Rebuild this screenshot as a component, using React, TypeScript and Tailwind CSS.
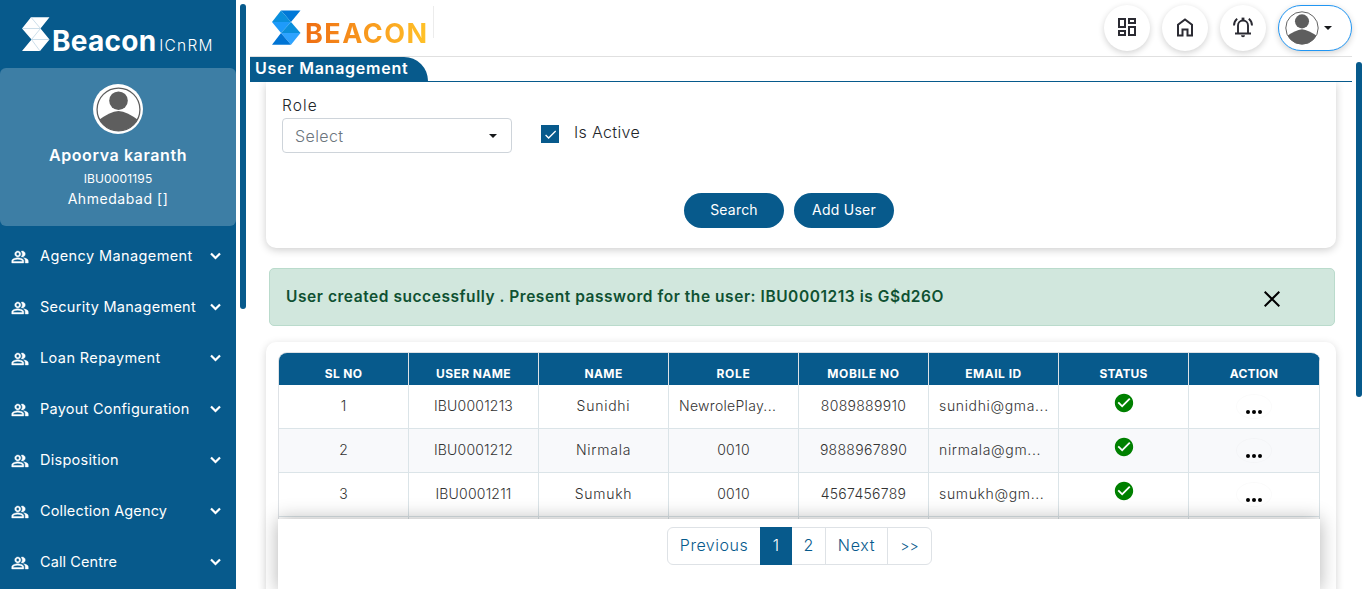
import React from "react";
import { MdOutlineDashboard, MdOutlinePeopleAlt, MdCheckCircle, MdCheck } from "react-icons/md";

const menu = [
  { label: "Agency Management", cls: "tracking-[0.4px]" },
  { label: "Security Management", cls: "tracking-[0.27px]" },
  { label: "Loan Repayment", cls: "tracking-[0.4px]" },
  { label: "Payout Configuration", cls: "tracking-[0.25px]" },
  { label: "Disposition", cls: "tracking-[0.27px]" },
  { label: "Collection Agency", cls: "tracking-[0.14px]" },
  { label: "Call Centre", cls: "tracking-[0.1px]" },
];

const columns = [
  { label: "SL NO", cls: "tracking-[0.3px]" },
  { label: "USER NAME", cls: "tracking-[0.4px]" },
  { label: "NAME", cls: "tracking-[0.4px]" },
  { label: "ROLE", cls: "tracking-[0.7px]" },
  { label: "MOBILE NO", cls: "tracking-[0.6px]" },
  { label: "EMAIL ID", cls: "tracking-[0.5px]" },
  { label: "STATUS", cls: "tracking-[0.1px]" },
  { label: "ACTION", cls: "tracking-[0.2px]" },
];

const cellClasses = [
  "text-center",
  "text-center tracking-[0.2px]",
  "text-center tracking-[0.75px]",
  "text-center tracking-[0.3px]",
  "text-center tracking-[0.3px]",
  "pl-[10px] text-left tracking-[0.65px]",
];

const rows = [
  ["1", "IBU0001213", "Sunidhi", "NewrolePlay...", "8089889910", "sunidhi@gma..."],
  ["2", "IBU0001212", "Nirmala", "0010", "9888967890", "nirmala@gm..."],
  ["3", "IBU0001211", "Sumukh", "0010", "4567456789", "sumukh@gm..."],
];

function Avatar({ size }: { size: number }) {
  return (
    <svg width={size} height={size} viewBox="0 0 42 42">
      <clipPath id={`disc-${size}`}>
        <circle cx="21" cy="21" r="20" />
      </clipPath>
      <circle cx="21" cy="21" r="20" fill="#fff" stroke="#5e5e5e" strokeWidth="1.2" />
      <g clipPath={`url(#disc-${size})`} fill="#5e5e5e">
        <circle cx="21" cy="12.800" r="8.700" />
        <path d="M1 32Q13 23 21 22.500Q29 23 41 32V44H1Z" />
      </g>
    </svg>
  );
}

function WhiteMark() {
  return (
    <svg width="28" height="35" viewBox="0 0 28 35" className="shrink-0">
      <path d="M9 0.300H27.500L18.500 11.500L27.500 22.500L18 34H0L9.500 22.500L0 11.500Z" fill="#fff" />
      <path d="M0 11.500H18.500M9.500 22.500H27M9 0.300L18.500 11.500L9.500 22.500L18 34" stroke="#a9c8dc" strokeWidth=".6" fill="none" />
    </svg>
  );
}

function BlueMark() {
  return (
    <svg width="29" height="36" viewBox="0 0 29 36" className="shrink-0">
      <path d="M9 0.500H28.500L19 12Z" fill="#0078d7" />
      <path d="M9 0.500L19 12H0Z" fill="#0a8fdc" />
      <path d="M0 12H19L9 23Z" fill="#1e9bfa" />
      <path d="M19 12L28.500 23H9Z" fill="#0a8fdc" />
      <path d="M9 23H28.500L19 34.800Z" fill="#2ea3ff" />
      <path d="M9 23L19 34.800H0Z" fill="#0074d4" />
    </svg>
  );
}

function HomeIcon() {
  return (
    <svg width="24" height="24" viewBox="0 0 24 24" fill="none" stroke="#2b2b33" strokeWidth="2">
      <path d="M5 19.500V8.800L12 3.500L19 8.800V19.500H14.500V13.500H9.500V19.500Z" />
    </svg>
  );
}

function BellIcon() {
  return (
    <svg width="24" height="24" viewBox="0 0 24 24" fill="none" stroke="#2b2b33" strokeWidth="1.9">
      <path d="M4 17.500H20M7 17.500V9.500A5 5 0 0 1 17 9.500V17.500" />
      <path d="M12 4.500V1.600" strokeWidth="2.800" />
      <path d="M6.200 2.800Q3 5.300 3 9.500M17.800 2.800Q21 5.300 21 9.500" />
      <path d="M10 19.300H14A2 2 0 0 1 10 19.300Z" fill="#2b2b33" stroke="none" />
    </svg>
  );
}

function Caret() {
  return <span className="h-0 w-0 border-x-4 border-t-4 border-x-transparent border-t-[#16181b]" />;
}

const roundButton =
  "flex h-[46px] w-[46px] items-center justify-center rounded-full bg-white text-[#2b2b33] shadow-[0_2px_6px_rgba(0,0,0,0.18)]";

export default function App() {
  return (
    <div className="flex h-[589px] w-[1366px] overflow-hidden bg-white font-[Inter,sans-serif] text-[#212529]">
      <aside className="flex w-[236px] shrink-0 flex-col bg-[#075a8c] text-white">
        <div className="flex h-[68px] shrink-0 pl-[22px] pt-[17px]">
          <WhiteMark />
          <span className="ml-[2px] mt-[8px] text-[28px] font-bold leading-[32px] tracking-[0.25px]">Beacon</span>
          <span className="ml-[3px] mt-[19px] text-[15.5px] font-light leading-[20px] tracking-[1.2px]">ICnRM</span>
        </div>
        <div className="flex h-[158px] shrink-0 flex-col items-center rounded-[6px] bg-[#3d7ea5] pt-[16px]">
          <div className="flex h-[50px] w-[50px] items-center justify-center rounded-full bg-white">
            <Avatar size={45} />
          </div>
          <div className="mt-[9px] text-[16px] font-semibold leading-[24px] tracking-[0.6px]">Apoorva karanth</div>
          <div className="mt-[2px] text-[12px] leading-[20px] tracking-[0.15px]">IBU0001195</div>
          <div className="-mt-px text-[14px] leading-[21px] tracking-[0.55px]">Ahmedabad []</div>
        </div>
        <nav className="flex flex-col pt-[4px]">
          {menu.map((item) => (
            <div key={item.label} className="flex h-[51px] shrink-0 items-center pl-[11px] pr-[15px]">
              <MdOutlinePeopleAlt size={18} className="mt-[2px] shrink-0 stroke-white stroke-[0.5] [&_path[fill=none]]:stroke-none" />
              <span className={`ml-[11px] flex-1 whitespace-nowrap text-[14.5px] leading-[22px] ${item.cls}`}>{item.label}</span>
              <svg width="11" height="8" viewBox="0 0 11 8" fill="none" stroke="#fff" strokeWidth="2.2" className="mt-px">
                <path d="M1 1.500L5.500 6L10 1.500" />
              </svg>
            </div>
          ))}
        </nav>
      </aside>

      <div className="w-[14px] shrink-0 pl-[4px] pt-[4px]">
        <div className="h-[305px] w-[6px] rounded-[3px] bg-[#075a8c]" />
      </div>

      <main className="flex w-[1102px] shrink-0 flex-col">
        <header className="flex h-[57px] shrink-0 justify-between border-b border-[#e0e0e0]">
          <div className="flex pl-[22px] pt-[10px]">
            <BlueMark />
            <span className="ml-[4px] mt-[8px] bg-linear-to-r from-[#ee6c13] to-[#ffc328] bg-clip-text text-[27px] font-bold leading-[32px] tracking-[1.5px] text-transparent">
              BEACON
            </span>
            <span className="-mt-[4px] ml-[4px] h-[32px] w-px bg-[#ececec]" />
          </div>
          <div className="flex gap-[12px] pt-[5px]">
            <div className={roundButton}><MdOutlineDashboard size={24} className="-mt-[2px]" /></div>
            <div className={roundButton}><HomeIcon /></div>
            <div className={roundButton}><BellIcon /></div>
            <div className="flex h-[46px] w-[74px] items-center gap-[5px] rounded-full border border-[#2196f3] bg-white pl-[6px] shadow-[0_2px_6px_rgba(0,0,0,0.18)]">
              <Avatar size={34} />
              <Caret />
            </div>
          </div>
        </header>
        <div className="flex h-[25px] shrink-0 border-b border-[#075a8c]">
          <h1 className="h-[25px] w-[178px] rounded-tr-[24px] bg-[#075a8c] pl-[5px] text-[16px] font-semibold leading-[23px] tracking-[0.75px] text-white">
            User Management
          </h1>
        </div>

        <div className="flex h-[507px] shrink-0 flex-col overflow-hidden">
          <section className="mx-[16px] h-[166px] shrink-0 rounded-b-[10px] bg-white px-[16px] pt-[13px] shadow-[0_2px_8px_rgba(0,0,0,0.2)]">
            <div className="flex">
              <div className="w-[230px]">
                <div className="text-[15.5px] font-light leading-[22px] tracking-[1.1px]">Role</div>
                <div className="mt-px flex h-[35px] items-center justify-between rounded-[4px] border border-[#ced4da] px-[12px] pr-[14px] text-[16px] font-light tracking-[0.4px] text-[#6c757d]">
                  Select
                  <Caret />
                </div>
              </div>
              <div className="ml-[29px] mt-[30px] flex h-[18px] w-[18px] items-center justify-center bg-[#075a8c] text-white">
                <MdCheck size={15} />
              </div>
              <span className="ml-[15px] mt-[25px] text-[16px] font-light leading-[24px] tracking-[0.35px]">Is Active</span>
            </div>
            <div className="mt-[40px] flex justify-center gap-[10px] pr-[24px] text-[14px] text-white">
              <button className="h-[35px] w-[100px] rounded-full bg-[#075a8c] pb-[2px] tracking-[0.2px]">Search</button>
              <button className="h-[35px] w-[100px] rounded-full bg-[#075a8c] pb-[2px] tracking-[0.25px]">Add User</button>
            </div>
          </section>

          <div className="ml-[19px] mt-[20px] flex h-[58px] w-[1066px] shrink-0 items-start justify-between rounded-[5px] border border-[#badbcc] bg-[#d1e7dd] pl-[16px] pr-[54px] text-[#0f5132]">
            <span className="mt-[16px] whitespace-nowrap text-[15.5px] font-semibold leading-[24px] tracking-[0.55px]">
              User created successfully . Present password for the user: IBU0001213 is G$d26O
            </span>
            <svg className="mt-[22px]" width="16" height="16" viewBox="0 0 16 16" stroke="#000" strokeWidth="2">
              <path d="M.7 .7L15.300 15.300M15.300 .7L.7 15.300" />
            </svg>
          </div>

          <section className="relative mx-[16px] mt-[16px] h-[300px] shrink-0 rounded-t-[10px] bg-white px-[12px] pt-[10px] shadow-[0_2px_8px_rgba(0,0,0,0.16)]">
            <table className="w-[1042px] table-fixed border-separate border-spacing-0 overflow-hidden rounded-t-[9px] border-l border-t border-[#dee2e6]">
              <thead>
                <tr>
                  {columns.map((column) => (
                    <th key={column.label} className={`h-[32px] w-[130px] border-r border-[#dee2e6] bg-[#075a8c] p-0 pt-[10px] text-[12px] font-bold leading-[22px] text-white last:w-[131px] ${column.cls}`}>
                      {column.label}
                    </th>
                  ))}
                </tr>
              </thead>
              <tbody>
                {rows.map((row) => (
                  <tr key={row[0]} className="even:bg-[#f8f9fb]">
                    {row.map((value, index) => (
                      <td key={index} className={`h-[44px] border-b border-r border-[#dbe4e8] p-0 pb-[2px] align-middle text-[14px] font-light text-[#333] ${value.endsWith("...") && index === 3 ? "pl-[10px] text-left tracking-[0.3px]" : cellClasses[index]}`}>
                        {value}
                      </td>
                    ))}
                    <td className="border-b border-r border-[#dbe4e8] p-0 align-top">
                      <MdCheckCircle size={22} color="#008000" className="mx-auto mt-[7px]" />
                    </td>
                    <td className="border-b border-r border-[#dbe4e8] p-0 align-top">
                      <div className="mx-auto mt-[9px] flex h-[25px] w-[36px] items-end justify-center gap-[2px] rounded-[50%] border border-black/2 pb-[4px]">
                        <i className="h-[4px] w-[4px] rounded-full bg-black" />
                        <i className="h-[4px] w-[4px] rounded-full bg-black" />
                        <i className="h-[4px] w-[4px] rounded-full bg-black" />
                      </div>
                    </td>
                  </tr>
                ))}
                <tr>
                  {columns.map((column) => (
                    <td key={column.label} className="h-[20px] border-r border-[#dbe4e8]" />
                  ))}
                </tr>
              </tbody>
            </table>
            <div className="absolute left-[12px] top-[177px] flex h-[72px] w-[1042px] items-start justify-center bg-white pl-px pt-[8px] shadow-[0_0_18px_rgba(0,0,0,0.3)]">
              <div className="flex h-[38px] w-[265px] rounded-[6px] border border-[#dee2e6] text-center text-[16px] font-light leading-[35px] text-[#075a8c]">
                <span className="w-[92px] tracking-[0.5px]">Previous</span>
                <span className="-my-px w-[32px] bg-[#075a8c] leading-[37px] text-white">1</span>
                <span className="w-[34px] border-r border-[#dee2e6]">2</span>
                <span className="w-[62px] border-r border-[#dee2e6] tracking-[0.7px]">Next</span>
                <span className="w-[43px] text-[14px]">&gt;&gt;</span>
              </div>
            </div>
          </section>
        </div>
      </main>

      <div className="w-[14px] shrink-0 pl-[4px] pt-[62px]">
        <div className="h-[335px] w-[6px] rounded-[3px] bg-[#075a8c]" />
      </div>
    </div>
  );
}
